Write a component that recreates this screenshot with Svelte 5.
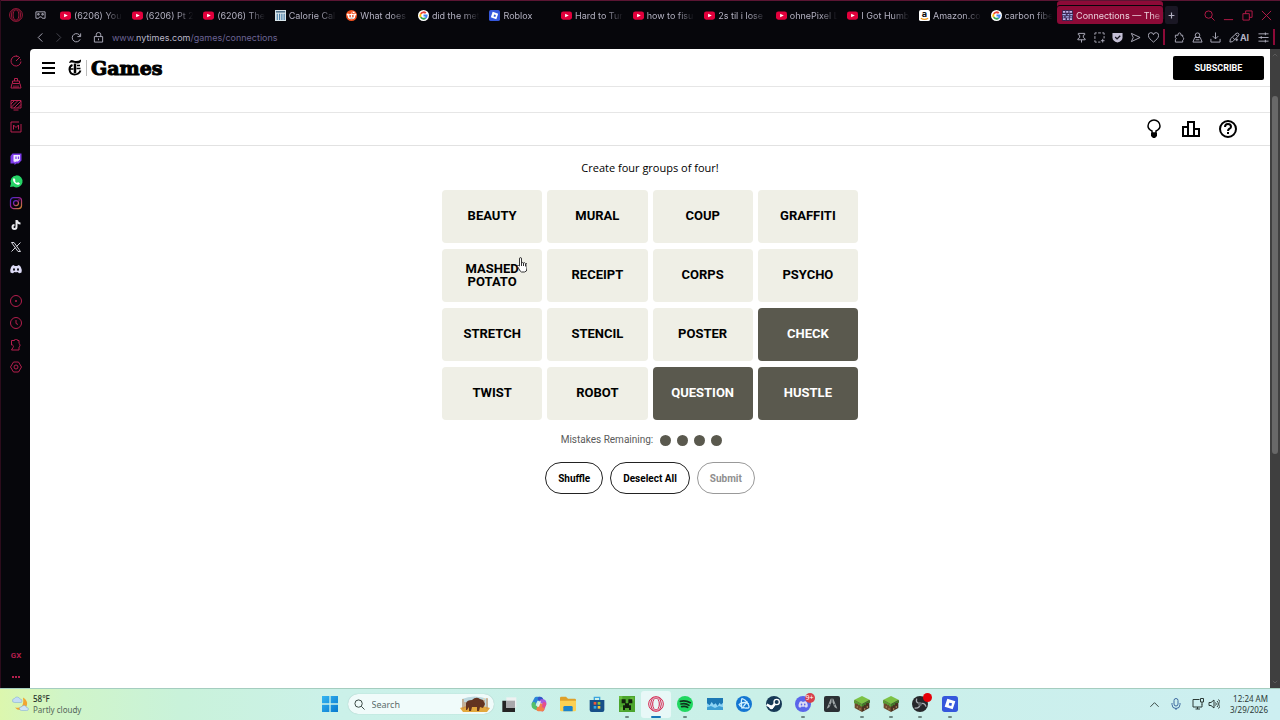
<script lang="ts">
	type Tab = { icon: string; title: string; active?: boolean };

	const tabs: Tab[] = [
		{ icon: 'youtube', title: '(6206) You' },
		{ icon: 'youtube', title: '(6206) Pt 2' },
		{ icon: 'youtube', title: '(6206) The' },
		{ icon: 'calc', title: 'Calorie Cal' },
		{ icon: 'reddit', title: 'What does' },
		{ icon: 'google', title: 'did the met' },
		{ icon: 'roblox', title: 'Roblox' },
		{ icon: 'youtube', title: 'Hard to Tur' },
		{ icon: 'youtube', title: 'how to fisu' },
		{ icon: 'youtube', title: '2s til i lose' },
		{ icon: 'youtube', title: 'ohnePixel L' },
		{ icon: 'youtube', title: 'I Got Humb' },
		{ icon: 'amazon', title: 'Amazon.co' },
		{ icon: 'google', title: 'carbon fibe' },
		{ icon: 'connections', title: 'Connections — The I', active: true }
	];

	const lines: Record<string, string> = {
		workspace: 'M2 4h20v14h-6l-2-3h-4l-2 3H2zM6 8h3v3H6zM15 8h3v3h-3z',
		back: 'M16 3l-9 9 9 9',
		forward: 'M8 3l9 9-9 9',
		reload: 'M21 3v7h-7M20 9a9 9 0 1 0 0 7',
		lock: 'M3 10h18v12H3zM7 10V6a5 5 0 0 1 10 0v4M12 14v4',
		search: 'M10 2a8 8 0 1 0 0 16a8 8 0 0 0 0-16M16 16l7 7',
		minimize: 'M2 21h20',
		restore: 'M2 8h14v14H2zM8 8V2h14v14h-6',
		close: 'M2 2l20 20M22 2L2 22',
		pin: 'M5 3h14v3l-3 1v5l4 3v2H4v-2l4-3V7L5 6zM12 17v6',
		capture: 'M2 6V2h4M9 2h6M18 2h4v4M22 9v5M2 9v6M2 18v4h4M9 22h5M15 19h8M19 15v8',
		send: 'M3 3l19 9-19 9 4-9z',
		heart: 'M12 22C5 16 1 13 1 8a5 5 0 0 1 11-2a5 5 0 0 1 11 2C23 13 19 16 12 22z',
		puzzle: 'M3 7h6V5a3 3 0 0 1 6 0v2h4v4a4 4 0 0 1 0 7v4H3v-5a3 3 0 0 0 0-5z',
		person: 'M12 2a5 5 0 1 0 0 10a5 5 0 0 0 0-10M6 12h12l4 10H2zM8 17h8',
		download: 'M12 1v14M6 9l6 6 6-6M2 15v7h20v-7',
		spark: 'M2 22l6-1 11-11-5-5L3 15zM14 4l5-2 3 3-3 5M8 12l5 5M17 14v6M14 17h6',
		easy: 'M1 4h22M1 12h22M1 20h22M16 1v6M7 9v6M16 17v6',
		plus: 'M12 2v20M2 12h20',
		dial: 'M20 6a10 10 0 1 0 2 7M12 12l8-8M12 2h2M22 9l-2 1',
		cleaner: 'M9 8V3h6v5M5 8h14v5H5zM4 13L2 22h20l-2-9M8 17v5M12 17v5M16 17v5',
		mods: 'M2 3h20v15H2zM7 22h10M2 10l7-7M2 17L16 3M8 18L22 4M15 18l7-7',
		market: 'M2 2h16M22 6v16H2V2M7 17V8l5 5 5-5v9',
		player: 'M12 1a11 11 0 1 0 0 22a11 11 0 0 0 0-22M12 10v4M10 12h4',
		history: 'M12 1a11 11 0 1 0 0 22a11 11 0 0 0 0-22M12 6v7l4 2',
		ext: 'M3 3h6a3 3 0 0 1 6 0h3v6a4 4 0 0 1 0 7v6H3l3-5a3 3 0 0 0-3-5z',
		gear: 'M7 2h10l6 10-6 10H7L1 12zM12 8a4 4 0 1 0 0 8a4 4 0 0 0 0-8',
		chevron: 'M3 17l9-9 9 9',
		mic: 'M12 1a4 4 0 0 0-4 4v7a4 4 0 0 0 8 0V5a4 4 0 0 0-4-4M4 10v3a8 8 0 0 0 16 0v-3M12 20v4',
		monitor: 'M15 3H2v15h18v-5M7 22h9M11 18v4M17 1h6v7h-6zM20 8v6',
		volume: 'M2 9h4l6-5v16l-6-5H2zM15 9a4 4 0 0 1 0 6M18 6a8 8 0 0 1 0 12M21 3a13 13 0 0 1 0 18'
	};

	const sidebar = [
		['dial', 'cleaner', 'mods', 'market'],
		['twitch', 'whatsapp', 'instagram', 'tiktok', 'x', 'discord'],
		['player', 'history', 'ext', 'gear']
	];

	const apps = [
		{ icon: 'desktops' },
		{ icon: 'copilot' },
		{ icon: 'folder' },
		{ icon: 'store' },
		{ icon: 'creeper', running: true },
		{ icon: 'opera', running: true, focused: true },
		{ icon: 'spotify', running: true },
		{ icon: 'monitorapp' },
		{ icon: 'battlenet' },
		{ icon: 'steam' },
		{ icon: 'discordapp', running: true, badge: '9+' },
		{ icon: 'ark' },
		{ icon: 'grass', running: true },
		{ icon: 'grass', running: true },
		{ icon: 'obs', running: true, recording: true },
		{ icon: 'roblox', running: true }
	];

	const words = [
		'BEAUTY', 'MURAL', 'COUP', 'GRAFFITI',
		'MASHED POTATO', 'RECEIPT', 'CORPS', 'PSYCHO',
		'STRETCH', 'STENCIL', 'POSTER', 'CHECK',
		'TWIST', 'ROBOT', 'QUESTION', 'HUSTLE'
	];

	let selected = $state(['CHECK', 'QUESTION', 'HUSTLE']);
	let mistakes = $state(4);

	function toggle(word: string) {
		if (selected.includes(word)) {
			selected = selected.filter((w) => w !== word);
		} else if (selected.length < 4) {
			selected = [...selected, word];
		}
	}
</script>

{#snippet line(name: string)}
	<svg class="line" viewBox="0 0 24 24" aria-hidden="true"><path d={lines[name]} /></svg>
{/snippet}

{#snippet art(name: string)}
	<svg class="art" viewBox="0 0 24 24" aria-hidden="true">
		{#if name === 'youtube'}
			<rect x="0" y="3" width="24" height="18" rx="5" fill="#e3003c" />
			<path d="M9 8l8 4-8 4z" fill="#fff" />
		{:else if name === 'calc'}
			<rect width="24" height="24" fill="#d8e4ea" />
			<path d="M2 4h20" stroke="#3a5d78" stroke-width="3" />
			<path d="M5 8v14M10 8v14M15 8v14M20 8v14" stroke="#4b7fa8" stroke-width="2.5" />
		{:else if name === 'reddit'}
			<circle cx="12" cy="12" r="12" fill="#f0501e" />
			<ellipse cx="12" cy="14" rx="8" ry="6" fill="#fff" />
			<circle cx="4" cy="10" r="2.5" fill="#fff" />
			<circle cx="20" cy="10" r="2.5" fill="#fff" />
			<circle cx="17" cy="5" r="2" fill="#fff" />
			<path d="M12 9l1-5 4 1" stroke="#fff" fill="none" />
			<circle cx="9" cy="13" r="2" fill="#e8481a" />
			<circle cx="15" cy="13" r="2" fill="#e8481a" />
			<path d="M8 17q4 2 8 0" stroke="#333" fill="none" />
		{:else if name === 'google'}
			<circle cx="12" cy="12" r="12" fill="#fff" />
			<g fill="none" stroke-width="4">
				<path d="M17 7A7 7 0 0 0 6 8.5" stroke="#e94335" />
				<path d="M6 8.5a7 7 0 0 0 0 7" stroke="#fabb05" />
				<path d="M6 15.5a7 7 0 0 0 10.5 2" stroke="#34a853" />
				<path d="M16.5 17.5A7 7 0 0 0 19 12h-7" stroke="#4285f4" />
			</g>
		{:else if name === 'roblox'}
			<rect width="24" height="24" rx="4" fill="#3557dc" />
			<path d="M8 4l12 4-4 12-12-4z" fill="#fff" />
			<path d="M11 10l4 1-1 4-4-1z" fill="#3557dc" />
		{:else if name === 'amazon'}
			<rect width="24" height="24" rx="4" fill="#fff" />
			<text x="12" y="16" text-anchor="middle" font-size="20" font-weight="700" fill="#111">a</text>
			<path d="M4 18q8 5 16 0" fill="none" stroke="#f59b16" stroke-width="2.5" />
		{:else if name === 'connections'}
			<rect width="24" height="24" rx="2" fill="#39254f" />
			<path d="M2 4h5M9 4h5M16 4h6M2 20h6M11 20h4M17 20h5" stroke="#c3b4e8" stroke-width="4" />
			<path d="M1 10h8M12 10h4M18 10h5M2 15h3M8 15h7M18 15h4" stroke="#aab9f5" stroke-width="3" />
			<path d="M8 1v22M16 1v22" stroke="#5c4a8a" />
		{:else if name === 'shield'}
			<path d="M1 2h22v10q0 8-11 11Q1 20 1 12z" fill="#c4bfd6" />
			<path d="M7 11l4 4 7-7" fill="none" stroke="#15131f" stroke-width="3" />
		{:else if name === 'twitch'}
			<path d="M5 1h18v14l-6 6h-4l-4 3v-3H1V6z" fill="#7d3bea" />
			<path d="M7 4h13v9l-4 4h-4l-3 2v-2H7z" fill="#f1eaff" />
			<path d="M12 7v5M17 7v5" stroke="#7d3bea" stroke-width="2.5" />
		{:else if name === 'whatsapp'}
			<path d="M0 24l2-7A12 12 0 1 1 7 23z" fill="#25d366" />
			<path d="M8 6l3 4-1 2q1 3 4 4l2-2 4 3q-2 4-6 2-7-3-8-9 0-3 2-4z" fill="#fff" />
		{:else if name === 'instagram'}
			<defs>
				<linearGradient id="insta" x1="0" y1="0" x2="1" y2="1">
					<stop offset="0" stop-color="#3e2bd0" />
					<stop offset="0.5" stop-color="#a02094" />
					<stop offset="1" stop-color="#d08a28" />
				</linearGradient>
			</defs>
			<g fill="none" stroke="url(#insta)" stroke-width="2.5">
				<rect x="1" y="1" width="22" height="22" rx="6" />
				<circle cx="12" cy="12" r="5" />
			</g>
			<circle cx="18" cy="6" r="1.5" fill="#a02094" />
		{:else if name === 'tiktok'}
			<path d="M13 2v14a4 4 0 1 1-4-4" fill="none" stroke="#e9e9ee" stroke-width="4" />
			<path d="M14 3q1 6 7 6" fill="none" stroke="#e9e9ee" stroke-width="4" />
		{:else if name === 'x'}
			<path d="M3 3h5l13 18h-5z" fill="none" stroke="#d4d4dc" stroke-width="2" />
			<path d="M21 3l-8 8M11 13l-8 8" stroke="#d4d4dc" stroke-width="2" />
		{:else if name === 'discord' || name === 'discordapp'}
			{#if name === 'discordapp'}
				<circle cx="12" cy="12" r="12" fill="#5a65ea" />
			{/if}
			<g class:small={name === 'discordapp'}>
				<path d="M8 4Q3 4 2 9q-3 6-1 10 4 2 6 1l1-2q4 1 8 0l1 2q2 1 6-1 2-4-1-10-1-5-6-5l-1 2H9z" fill="#dcdaf5" />
				<ellipse cx="8" cy="13" rx="2" ry="2.5" fill={name === 'discord' ? '#09080e' : '#5a65ea'} />
				<ellipse cx="16" cy="13" rx="2" ry="2.5" fill={name === 'discord' ? '#09080e' : '#5a65ea'} />
			</g>
		{:else if name === 'opera'}
			<g fill="none" stroke="#d41f4c" stroke-width="1.5">
				<circle cx="12" cy="12" r="11" />
				<ellipse cx="12" cy="12" rx="5" ry="9" />
				<path d="M9 2Q4 5 4 12t5 10M15 2q5 3 5 10t-5 10" />
			</g>
		{:else if name === 'windows'}
			<defs>
				<linearGradient id="win" x1="0" y1="0" x2="1" y2="1">
					<stop offset="0" stop-color="#35b5f1" />
					<stop offset="1" stop-color="#0879cf" />
				</linearGradient>
			</defs>
			<path d="M0 0h11v11H0zM13 0h11v11H13zM0 13h11v11H0zM13 13h11v11H13z" fill="url(#win)" />
		{:else if name === 'desktops'}
			<path d="M8 2h15v15H8z" fill="#eef1f1" />
			<path d="M2 7h6v11h13v6H2z" fill="#242424" />
			<path d="M8 7h13v11H8z" fill="#a9a9ac" />
		{:else if name === 'copilot'}
			<g fill="none" stroke-width="6" stroke-linejoin="round" stroke-linecap="round">
				<path d="M13 4H8L4 12" stroke="#2a87d8" />
				<path d="M4 12q-1 5 4 6" stroke="#55c069" />
				<path d="M13 4q3 0 3 4" stroke="#3355c9" />
				<path d="M16 8q5-1 4 4" stroke="#a85be0" />
				<path d="M20 12l-3 8" stroke="#e34e90" />
				<path d="M17 20h-6l3-6" stroke="#f2804a" />
			</g>
			<path d="M13 8h2l-3 8h-3z" fill="#e6f6f3" />
		{:else if name === 'folder'}
			<path d="M0 3q0-2 2-2h7l3 3h10q2 0 2 2v15H0z" fill="#dfa12a" />
			<path d="M0 7h24v14q0 2-2 2H2q-2 0-2-2z" fill="#fbd153" />
			<path d="M5 17q0-2 2-2h10q2 0 2 2v6H5z" fill="#1b83cb" />
		{:else if name === 'store'}
			<path d="M8 7V2h8v5" fill="none" stroke="#3ba5df" stroke-width="2" />
			<path d="M1 6h22v15q0 3-3 3H4q-3 0-3-3z" fill="#174f88" />
			<path d="M7 9h4v4H7z" fill="#f0573a" /><path d="M13 9h4v4h-4z" fill="#8cc43c" />
			<path d="M7 15h4v4H7z" fill="#36a8e8" /><path d="M13 15h4v4h-4z" fill="#fac435" />
		{:else if name === 'creeper'}
			<rect width="24" height="24" fill="#4ba52d" />
			<path d="M0 0h5v5H0zM17 2h5v5h-5zM2 17h4v5H2z" fill="#68bd3f" />
			<path d="M4 5h6v6h4V5h6v6h-5v3h3v7h-3v-3H9v3H6v-7h3v-3H4z" fill="#10200b" />
		{:else if name === 'spotify'}
			<circle cx="12" cy="12" r="12" fill="#20d760" />
			<path d="M5 8q8-2 15 2M6 12q7-2 12 2M7 16q6-1 9 1" fill="none" stroke="#10321d" stroke-width="2.5" stroke-linecap="round" />
		{:else if name === 'monitorapp'}
			<rect y="3" width="24" height="18" fill="#8fd5f5" />
			<path d="M0 3h24v7l-3 3-2-3-3 5-3-4-3 2-3-4-3 5-4-3z" fill="#1c78b4" />
			<path d="M0 17l6-2 6 3 6-3 6 2v4H0z" fill="#3d9fd4" />
		{:else if name === 'battlenet'}
			<circle cx="12" cy="12" r="12" fill="#1476d2" />
			<g fill="none" stroke="#d1f0ff" stroke-width="2">
				<path d="M9 19Q7 7 9 4q5 1 9 8t-2 6q-5 1-11-4" />
				<path d="M4 13q8-6 15-1M11 16l6-8" />
			</g>
		{:else if name === 'steam'}
			<circle cx="12" cy="12" r="12" fill="#173956" />
			<path d="M1 13l8 4 5-6" fill="none" stroke="#fff" stroke-width="4" />
			<circle cx="16" cy="9" r="4" fill="#173956" stroke="#fff" stroke-width="2" />
			<circle cx="8" cy="17" r="3" fill="#fff" />
		{:else if name === 'ark'}
			<rect width="24" height="24" rx="3" fill="#2b3034" />
			<path d="M10 4h4l6 15-4-2-4-9-4 9-4 2z" fill="#a2a8a9" />
			<path d="M12 4v5M7 12l3 2M17 12l-3 2" stroke="#555c60" stroke-width="2" />
		{:else if name === 'grass'}
			<path d="M12 0l12 6-12 6L0 6z" fill="#7cc245" />
			<path d="M1 6l11 6v12L1 18z" fill="#6d4a2f" />
			<path d="M23 6l-11 6v12l11-6z" fill="#4a3221" />
			<path d="M0 6l12 6v4l-3-1v-2l-3 1v-2l-6-1z" fill="#5b9b35" />
			<path d="M24 6l-12 6v4l3-1v-2l3 1v-3l6-1z" fill="#42792a" />
			<path d="M5 15v3M9 18v3M16 18v3M20 15v3" stroke="#9a7350" stroke-width="2" />
		{:else if name === 'obs'}
			<circle cx="12" cy="12" r="12" fill="#26272b" />
			<g fill="none" stroke="#a8abb1" stroke-width="2">
				<path d="M12 11Q5 11 7 4M12 12q7-3 9 4M12 13q-1 6-8 5" />
			</g>
			<circle cx="12" cy="12" r="3" fill="#64676c" />
		{/if}
	</svg>
{/snippet}

<div class="desktop">
	<div class="browser">
		<header class="chrome">
			<div class="tab-row">
				<button class="opera-menu" aria-label="Menu">{@render art('opera')}</button>
				<button class="workspace" aria-label="Workspaces">{@render line('workspace')}</button>
				<nav class="tabs" aria-label="Tabs">
					{#each tabs as tab}
						<button class="tab" class:active={tab.active}>
							{@render art(tab.icon)}
							<span>{tab.title}</span>
						</button>
					{/each}
				</nav>
				<button class="new-tab" aria-label="New tab">{@render line('plus')}</button>
				<div class="window-controls">
					{#each ['search', 'minimize', 'restore', 'close'] as name}
						<button aria-label={name}>{@render line(name)}</button>
					{/each}
				</div>
			</div>

			<div class="address-row">
				<div class="nav-buttons">
					<button aria-label="Back">{@render line('back')}</button>
					<button class="dim" aria-label="Forward">{@render line('forward')}</button>
					<button aria-label="Reload">{@render line('reload')}</button>
				</div>
				<span class="lock">{@render line('lock')}</span>
				<a class="url" href="/games/connections">www.<b>nytimes.com</b>/games/connections</a>
				<div class="tools">
					{#each ['pin', 'capture', 'shield', 'send', 'heart'] as name}
						<button aria-label={name}>
							{#if name === 'shield'}{@render art(name)}{:else}{@render line(name)}{/if}
						</button>
					{/each}
					<span class="divider"></span>
					{#each ['puzzle', 'person', 'download'] as name}
						<button aria-label={name}>{@render line(name)}</button>
					{/each}
					<button class="ai">{@render line('spark')}AI</button>
					<button aria-label="Easy setup">{@render line('easy')}</button>
					<span class="divider"></span>
				</div>
			</div>
		</header>

		<aside class="sidebar">
			{#each sidebar as group, i}
				<div class="side-group">
					{#each group as name}
						<button aria-label={name}>
							{#if i === 1}{@render art(name)}{:else}{@render line(name)}{/if}
						</button>
					{/each}
				</div>
			{/each}
			<div class="side-group bottom">
				<button>GX</button>
				<button aria-label="More"><i></i><i></i><i></i></button>
			</div>
		</aside>

		<main class="page">
			<header class="site-header">
				<button class="burger" aria-label="Open navigation"><i></i><i></i><i></i></button>
				<a class="brand" href="/games">
					<svg class="mark" viewBox="0 0 28 34" aria-hidden="true">
						<path d="M2 8Q4 0 11 3t15-2q1 8-7 8-7-2-12-2-3 0-5 1z" fill="#000" stroke="none" />
						<path d="M9 12Q3 14 3 21q1 10 10 10 9 0 12-8" stroke-width="4" />
						<path d="M14 9v19" stroke-width="5" />
						<path d="M4 20h7M17 19h8M18 13h6" stroke-width="3" />
					</svg>
					<span class="rule"></span>
					<span class="wordmark">Games</span>
				</a>
				<button class="subscribe">SUBSCRIBE</button>
			</header>
			<div class="strip"></div>
			<div class="toolbar">
				<button aria-label="Hints">
					<svg class="thin" viewBox="0 0 20 20"><path d="M8 14v-2Q4 10 4 7a6 6 0 0 1 12 0q0 3-4 5v2z" /><path class="solid" d="M7 14h6v3l-2 2H9l-2-2z" /></svg>
				</button>
				<button aria-label="Statistics">
					<svg viewBox="0 0 20 20"><path d="M2 8h5v9H2zM7 3h6v14H7zM13 10h5v7h-5z" /></svg>
				</button>
				<button aria-label="Help">
					<svg viewBox="0 0 20 20"><circle cx="10" cy="10" r="8" /><path d="M7 8q0-3 3-3t3 3q0 1-2 2-1 1-1 2" /><path class="solid" d="M9 13h2v2H9z" /></svg>
				</button>
			</div>

			<section class="game">
				<h2>Create four groups of four!</h2>
				<div class="board">
					{#each words as word}
						<button class="tile" class:selected={selected.includes(word)} onclick={() => toggle(word)}>
							<span>{word}</span>
							{#if word === 'MASHED POTATO'}
								<svg class="pointer" viewBox="0 0 20 32" aria-hidden="true">
									<path d="M5 18V4q0-3 2-3t2 3v8q1-2 4 0 2-2 4 1 3-1 3 2v7q0 8-5 8H9q-3-1-5-6l-3-5q-1-3 2-2z" />
									<path d="M9 12v6M13 12v6M17 14v5" />
								</svg>
							{/if}
						</button>
					{/each}
				</div>
				<div class="mistakes">
					<span>Mistakes Remaining:</span>
					<div class="dots">
						{#each { length: mistakes } as _}<i></i>{/each}
					</div>
				</div>
				<div class="actions">
					<button>Shuffle</button>
					<button onclick={() => (selected = [])}>Deselect All</button>
					<button disabled={selected.length < 4}>Submit</button>
				</div>
			</section>
		</main>

		<div class="scrollbar">
			<span class="arrow">{@render line('chevron')}</span>
			<div class="thumb"></div>
			<span class="arrow down">{@render line('chevron')}</span>
		</div>
	</div>

	<footer class="taskbar">
		<button class="weather">
			<svg viewBox="0 0 34 32" aria-hidden="true">
				<path d="M22 3q10 6 8 15-3 10-14 10-6 0-10-5 14 3 16-8 1-6 0-12z" fill="#f2a531" />
				<path d="M5 13q-5 0-4-5 1-3 4-3 2-4 6-3t5 4q4 0 4 4t-4 3z" fill="#c3dbf5" stroke="#7ba7d6" />
				<path d="M19 29q-4 0-4-4t4-3q2-4 6-3t4 4q4 0 4 3t-4 3z" fill="#cfe3f8" stroke="#7ba7d6" />
			</svg>
			<span><b>58°F</b>Partly cloudy</span>
		</button>

		<div class="center">
			<button class="app" aria-label="Start">{@render art('windows')}</button>
			<label class="search">
				{@render line('search')}
				<input type="text" placeholder="Search" aria-label="Search" />
				<svg class="bison" viewBox="0 0 32 18" aria-hidden="true">
					<path d="M3 4q12-5 26 0v9H3z" fill="#bcd8df" />
					<path d="M1 13q14-6 30 0l-3 4H4z" fill="#e3a83d" />
					<path d="M4 4v10M6 7v6M28 3v11M25 5v6" stroke="#c78a55" />
					<path d="M7 8q1-3 6-3 4-4 8-1l3 1 2 4-2 4-3-1-1 4h-2v-4h-5l-1 4h-2v-4l-2 3H7z" fill="#633421" />
					<path d="M24 5l2-2" stroke="#f3d8a8" />
				</svg>
			</label>
			<div class="apps">
				{#each apps as app}
					<button class="app" class:running={app.running} class:focused={app.focused} aria-label={app.icon}>
						{@render art(app.icon)}
						{#if app.badge}<span class="badge">{app.badge}</span>{/if}
						{#if app.recording}<span class="badge rec"></span>{/if}
					</button>
				{/each}
			</div>
		</div>

		<div class="tray">
			<button aria-label="Hidden icons">{@render line('chevron')}</button>
			<button class="mic" aria-label="Microphone">{@render line('mic')}</button>
			<button class="status" aria-label="Network and sound">{@render line('monitor')}{@render line('volume')}</button>
			<button class="clock"><span>12:24 AM</span><span>3/29/2026</span></button>
		</div>
	</footer>
</div>

<style>
	:global(body) {
		background: #06060b;
	}

	.desktop {
		display: flex;
		flex-direction: column;
		min-height: 100vh;
		font-family: Roboto, 'Liberation Sans', sans-serif;
		font-size: 10px;
	}

	.desktop * {
		box-sizing: border-box;
	}

	button {
		display: flex;
		align-items: center;
		justify-content: center;
		padding: 0;
		border: 0;
		background: none;
		color: inherit;
		font: inherit;
		cursor: pointer;
	}

	svg {
		display: block;
		flex: none;
	}

	.line {
		width: 11px;
		height: 11px;
		fill: none;
		stroke: currentColor;
		stroke-width: 2;
	}

	.art {
		width: 11px;
		height: 11px;
		overflow: visible;
	}

	.small {
		transform: translate(5px, 5px) scale(0.6);
	}

	.browser {
		flex: 1;
		display: grid;
		grid-template-columns: 29px 1fr 10px;
		grid-template-rows: 49px 1fr;
		background: #06060b;
		border-left: 1px solid #2c0c1c;
	}

	.chrome {
		grid-column: 1 / -1;
		color: #b4b2c2;
		font-family: Inter, 'Liberation Sans', sans-serif;
		font-size: 9px;
	}

	.tab-row {
		display: flex;
		align-items: center;
		height: 25px;
		padding: 4px 4px 0 0;
		border-top: 1px solid #5b1533;
	}

	.opera-menu {
		width: 29px;
	}

	.opera-menu .art {
		width: 14px;
		height: 14px;
		opacity: 0.8;
	}

	.workspace {
		width: 20px;
		margin-right: 5px;
	}

	.tabs {
		flex: 1;
		display: flex;
		min-width: 0;
	}

	.tab {
		flex: 1 1 0;
		justify-content: flex-start;
		gap: 3px;
		min-width: 0;
		height: 18px;
		padding: 0 2px 0 5px;
	}

	.tab span {
		flex: 1;
		overflow: visible;
		white-space: nowrap;
		text-align: left;
		mask-image: linear-gradient(to right, #000 60%, transparent 95%);
	}

	.tab.active {
		flex: 0 0 106px;
		border-radius: 3px;
		background: #8c0a37;
		color: #ecd3de;
		box-shadow: 0 -1px 0 #06060b, 0 -5px 0 #8c0a37;
	}

	.tab.active span {
		mask-image: linear-gradient(to right, #000 85%, transparent);
	}

	.new-tab {
		width: 13px;
		height: 18px;
		margin: 0 22px 0 2px;
		border-radius: 2px;
		background: #1a1724;
	}

	.new-tab .line {
		width: 7px;
		height: 7px;
		stroke-width: 4;
	}

	.window-controls {
		display: flex;
		color: #c01b4c;
	}

	.window-controls button {
		width: 19px;
		height: 18px;
	}

	.address-row {
		display: flex;
		align-items: center;
		height: 24px;
		padding-left: 30px;
	}

	.nav-buttons {
		display: flex;
	}

	.nav-buttons button {
		width: 18px;
		height: 18px;
	}

	.dim {
		opacity: 0.4;
	}

	.lock {
		display: flex;
		justify-content: center;
		width: 27px;
	}

	.url {
		color: #6b6494;
		text-decoration: none;
	}

	.url b {
		color: #b9b6c9;
		font-weight: 400;
	}

	.tools {
		display: flex;
		align-items: center;
		margin-left: auto;
	}

	.tools button {
		width: 18px;
		height: 18px;
	}

	.divider {
		width: 2px;
		height: 16px;
		margin: 0 5px 0 1px;
		background: #8c0a37;
	}

	.tools .ai {
		width: 30px;
		font-weight: 700;
	}

	.sidebar {
		display: flex;
		flex-direction: column;
		padding-top: 1px;
		color: #b51f4e;
	}

	.side-group {
		margin-bottom: 10px;
	}

	.side-group button {
		width: 30px;
		height: 22px;
	}

	.side-group .line,
	.side-group .art {
		width: 12px;
		height: 12px;
	}

	.side-group.bottom {
		margin: auto 0 0;
		font-size: 8px;
		font-weight: 700;
	}

	.side-group.bottom button {
		gap: 1px;
	}

	.side-group.bottom i {
		width: 2px;
		height: 2px;
		background: currentColor;
	}

	.page {
		display: flex;
		flex-direction: column;
		border-top-left-radius: 4px;
		background: #fff;
		color: #000;
	}

	.site-header {
		display: flex;
		align-items: center;
		height: 38px;
		padding: 0 6px 0 12px;
		border-bottom: 1px solid #e6e6e6;
	}

	.burger {
		flex-direction: column;
		gap: 3px;
		width: 13px;
		margin-right: 13px;
	}

	.burger i {
		width: 100%;
		height: 2px;
		background: #000;
	}

	.brand {
		display: flex;
		align-items: center;
		color: #000;
		text-decoration: none;
	}

	.mark {
		width: 14px;
		height: 17px;
		fill: none;
		stroke: #000;
	}

	.rule {
		width: 1px;
		height: 16px;
		margin: 0 4px;
		background: #bbb;
	}

	.wordmark {
		font-family: 'DejaVu Serif', serif;
		font-size: 19px;
		font-weight: 700;
		line-height: 20px;
		-webkit-text-stroke: 1px #000;
	}

	.subscribe {
		width: 91px;
		height: 24px;
		margin-left: auto;
		border-radius: 2px;
		background: #000;
		color: #fff;
		font-size: 9px;
		font-weight: 700;
	}

	.strip {
		height: 26px;
		border-bottom: 1px solid #e6e6e6;
	}

	.toolbar {
		display: flex;
		justify-content: flex-end;
		gap: 17px;
		height: 33px;
		padding-right: 32px;
		border-bottom: 1px solid #e2e2e2;
	}

	.toolbar svg {
		width: 20px;
		height: 20px;
		fill: none;
		stroke: #000;
		stroke-width: 2;
	}

	.toolbar .thin {
		stroke-width: 1.5;
	}

	.toolbar .solid {
		fill: #000;
		stroke: none;
	}

	.game {
		display: flex;
		flex-direction: column;
		align-items: center;
		padding-top: 14px;
	}

	h2 {
		margin: 0 0 14px;
		font-family: 'Open Sans', sans-serif;
		font-size: 11px;
		font-weight: 400;
		line-height: 16px;
	}

	.board {
		display: grid;
		grid-template-columns: repeat(4, 1fr);
		grid-auto-rows: 53px;
		gap: 6px 5px;
		width: 100%;
		max-width: 416px;
	}

	.tile {
		position: relative;
		padding: 0 16px 2px;
		border-radius: 4px;
		background: #efefe6;
		font-size: 13px;
		font-weight: 700;
		line-height: 13px;
	}

	.tile.selected {
		background: #5a594e;
		color: #fff;
	}

	.pointer {
		position: absolute;
		top: 8px;
		right: 15px;
		width: 10px;
		height: 16px;
		fill: #fff;
		stroke: #333;
		stroke-width: 2;
	}

	.mistakes {
		display: flex;
		align-items: center;
		gap: 7px;
		margin-top: 13px;
		padding-right: 17px;
		color: #5a5a5a;
		font-size: 10px;
		line-height: 14px;
	}

	.dots {
		display: flex;
		gap: 6px;
	}

	.dots i {
		width: 11px;
		height: 11px;
		border-radius: 50%;
		background: #5a594e;
	}

	.actions {
		display: flex;
		gap: 7px;
		margin-top: 15px;
	}

	.actions button {
		height: 32px;
		padding: 0 12px;
		border: 1px solid #222;
		border-radius: 16px;
		font-size: 10px;
		font-weight: 700;
	}

	.actions button:disabled {
		border-color: #999;
		color: #8f8f8f;
	}

	.scrollbar {
		display: flex;
		flex-direction: column;
		align-items: center;
		background: #3f3f3f;
		color: #777;
	}

	.arrow {
		padding: 3px 0;
	}

	.arrow .line {
		width: 6px;
		height: 6px;
	}

	.arrow.down {
		margin-top: auto;
		transform: rotate(180deg);
	}

	.thumb {
		width: 6px;
		height: 56%;
		margin-top: 35px;
		border-radius: 3px;
		background: #686868;
	}

	.taskbar {
		display: grid;
		grid-template-columns: 1fr auto 1fr;
		align-items: center;
		height: 32px;
		padding-bottom: 1px;
		border-top: 1px solid #a5cdbf;
		background: linear-gradient(to right, #dcf7ae 0, #d0f5c8 5%, #c9f2da 14%, #cbf1e9 26%, #caf0e8 60%, #cdeff1 100%);
		color: #2c3a36;
		font-family: 'Noto Sans', sans-serif;
		font-size: 8px;
	}

	.weather {
		justify-self: start;
		gap: 4px;
		padding-left: 12px;
		line-height: 11px;
		text-align: left;
		color: #54665a;
	}

	.weather svg {
		width: 17px;
		height: 16px;
	}

	.weather b {
		display: block;
		color: #26322c;
		font-weight: 500;
	}

	.center {
		display: flex;
		align-items: center;
	}

	.app {
		position: relative;
		width: 29px;
		height: 27px;
		border-radius: 3px;
	}

	.app .art {
		width: 16px;
		height: 16px;
	}

	.search {
		display: flex;
		align-items: center;
		gap: 7px;
		width: 146px;
		height: 20px;
		margin: 0 1px 0 3px;
		padding: 0 3px 0 6px;
		border-radius: 10px;
		background: #f0fbfa;
		box-shadow: 0 0 1px #8cb5ae;
	}

	.search input {
		flex: 1;
		min-width: 0;
		padding: 0;
		border: 0;
		outline: 0;
		background: none;
		color: #4c5c5c;
		font: inherit;
		font-size: 9px;
	}

	.search input::placeholder {
		color: #5c6c6c;
	}

	.bison {
		width: 32px;
		height: 18px;
		fill: none;
	}

	.apps {
		display: flex;
		width: 470px;
	}

	.apps .app {
		flex: 1;
		width: auto;
	}

	.app.focused {
		background: #e8f8f7;
	}

	.app.running::after {
		content: '';
		position: absolute;
		bottom: 0;
		left: calc(50% - 2px);
		width: 4px;
		height: 2px;
		border-radius: 1px;
		background: #6e8783;
	}

	.app.focused::after {
		left: calc(50% - 5px);
		width: 10px;
		background: #1475b8;
	}

	.badge {
		position: absolute;
		top: 2px;
		right: 3px;
		width: 10px;
		height: 10px;
		border-radius: 50%;
		background: #d7404b;
		color: #fff;
		font-size: 7px;
		line-height: 10px;
		text-align: center;
	}

	.badge.rec {
		width: 9px;
		height: 9px;
		background: #e50008;
	}

	.tray {
		display: flex;
		align-items: center;
		justify-self: end;
		gap: 10px;
		padding-right: 12px;
	}

	.mic {
		color: #3d6aa0;
	}

	.mic .line,
	.status .line {
		width: 12px;
		height: 12px;
	}

	.status {
		gap: 4px;
	}

	.clock {
		flex-direction: column;
		align-items: flex-end;
		line-height: 11px;
	}
</style>
